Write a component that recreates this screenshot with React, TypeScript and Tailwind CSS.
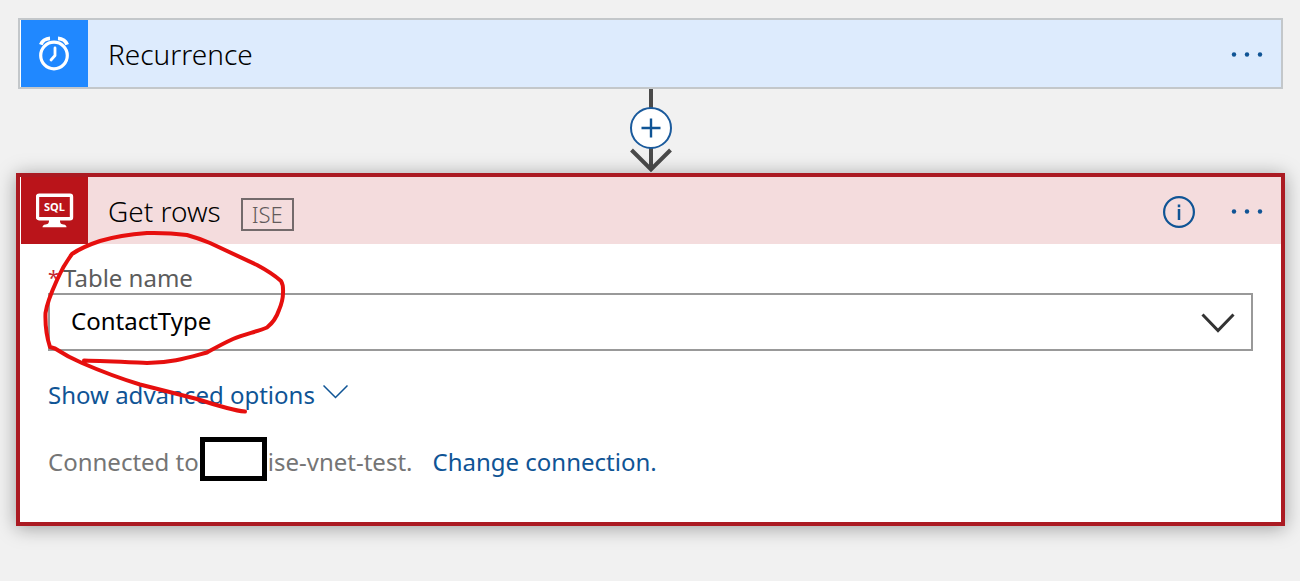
import React from "react";

function MoreButton({ label }: { label: string }) {
  return (
    <button type="button" aria-label={label} className="flex h-8 w-8 items-center justify-center text-[#0f5495]">
      <svg width="32" height="6" viewBox="0 0 32 6" fill="currentColor">
        <circle cx="3" cy="3.500" r="2.200" />
        <circle cx="16" cy="3.500" r="2.200" />
        <circle cx="29" cy="3.500" r="2.200" />
      </svg>
    </button>
  );
}

function ClockIcon() {
  return (
    <svg width="34" height="38" viewBox="0 0 34 38" fill="none" stroke="#fff">
      <circle cx="16" cy="20.500" r="13.300" strokeWidth="3.200" />
      <path d="M17 13v7.500l-4 4.500" strokeWidth="2.800" strokeLinecap="round" strokeLinejoin="round" />
      <path d="M2.800 9.600C4 6.400 7.600 3.600 12 3.400" strokeWidth="3.800" />
      <path d="M29.200 9.600C28 6.400 24.400 3.600 20 3.400" strokeWidth="3.800" />
    </svg>
  );
}

function SqlIcon() {
  return (
    <svg width="38" height="36" viewBox="0 0 38 36">
      <rect x="1.500" y="2.300" width="34" height="23.400" rx="1.500" fill="none" stroke="#fff" strokeWidth="3.400" />
      <path d="M13 27h11c0 3 .5 4 3.500 4.500q3 .5 3 2.800h-24q0-2.300 3-2.800c3-.5 3.500-1.500 3.500-4.500z" fill="#fff" />
      <text x="18.500" y="17.500" textAnchor="middle" fontSize="11" fontWeight="700" fill="#fff">
        SQL
      </text>
    </svg>
  );
}

function Connector() {
  return (
    <div className="relative flex h-[84px] justify-center">
      <svg width="44" height="84" viewBox="0 0 44 84" fill="none" stroke="#4a4a4a" strokeWidth="4">
        <path d="M22 0v80M2.500 61L22 80.500 41.500 61" />
      </svg>
      <button
        type="button"
        aria-label="Insert a new step"
        className="absolute top-[18px] flex h-[42px] w-[42px] items-center justify-center rounded-full border-2 border-[#1a5a9c] bg-white text-[#0f5495]"
      >
        <svg width="20" height="20" viewBox="0 0 20 20" stroke="currentColor" strokeWidth="2.400">
          <path d="M10 .5v19M.5 10h19" />
        </svg>
      </button>
    </div>
  );
}

function Scribble() {
  return (
    <svg
      className="pointer-events-none absolute top-[50px] left-[20px]"
      width="250"
      height="190"
      viewBox="40 227 250 190"
      fill="none"
      stroke="#e60f0e"
      strokeWidth="4"
      strokeLinecap="round"
      strokeLinejoin="round"
      aria-hidden="true"
    >
      <path d="M84 360.500C105 361 125 362 147 363C172 363 190 357 207 352.500C215 348 222 344 233 339C245 334 256 332 267 327.500C274 322 277 316 279 310C282 303 283 298 283 293Q283.500 285 281 281Q272 273 257 265L210 243Q198 238 187 235Q168 232.500 147 233Q120 235 100 241Q82 247 72 254Q63 266 57 280Q47 302 45.500 313C45 328 47 338 50 347L55 348.500Q68 357 82 363Q112 376 140 384.500L197 399Q212 404 227 408Q238 411 245 411.500" />
    </svg>
  );
}

export default function App() {
  return (
    <main className="min-h-screen bg-[#f1f1f1] pt-[18px] pr-[15px] pb-14 pl-4 font-['Noto_Sans','Open_Sans',sans-serif] text-2xl">
      <section className="mx-[2px] flex items-center border-2 border-[#c3c7ca] bg-[#ddebfd] pr-[18px]">
        <div className="flex h-[67px] w-[68px] items-center justify-center border-l border-white bg-[#2088ff]">
          <ClockIcon />
        </div>
        <h2 className="ml-5 flex-1 text-[28px] leading-9 font-light text-black">Recurrence</h2>
        <MoreButton label="Recurrence menu" />
      </section>

      <Connector />

      <section className="relative border-4 border-[#ab1a22] bg-white shadow-[0_2px_18px_rgba(0,0,0,0.35)]">
        <header className="flex items-center bg-[#f4dcdd] pr-[18px]">
          <div className="flex h-[67px] w-[68px] items-center justify-center border-l border-white bg-[#ba141a]">
            <SqlIcon />
          </div>
          <h2 className="ml-5 pt-px text-[28px] leading-9 font-light text-black">Get rows</h2>
          <span className="mt-2 ml-5 flex h-[33px] w-[53px] items-center justify-center border-2 border-[#736a6b] text-[22px] font-light text-[#625a5b]">
            ISE
          </span>
          <button type="button" aria-label="Information" className="mr-[36px] ml-auto pt-[2px] text-[#0f5495]">
            <svg width="32" height="32" viewBox="0 0 32 32" fill="none" stroke="currentColor">
              <circle cx="16" cy="16" r="14.900" strokeWidth="2.200" />
              <path d="M16 13v11M16 8.500v2.800" strokeWidth="2.500" />
            </svg>
          </button>
          <MoreButton label="Get rows menu" />
        </header>

        <div className="px-7 pt-[18px] pb-[41px]">
          <label htmlFor="table" className="flex leading-[31px] text-[#5c5c5c]">
            <span className="w-[15px] text-xl leading-[31px] text-[#c4262e]">*</span>
            Table name
          </label>
          <div className="relative">
            <select
              id="table"
              defaultValue="ContactType"
              className="block h-[58px] w-full appearance-none border-2 border-[#999] bg-white pb-[2px] pl-[21px] text-black"
            >
              <option>ContactType</option>
            </select>
            <svg
              className="pointer-events-none absolute top-5 right-[18px]"
              width="34"
              height="20"
              viewBox="0 0 34 20"
              fill="none"
              stroke="#333"
              strokeWidth="3"
            >
              <path d="M1.500 1.500L17 17.500 32.500 1.500" />
            </svg>
          </div>
          <button type="button" className="mt-7 flex items-center gap-2 leading-8 text-[#0f5495]">
            Show advanced options
            <svg width="25" height="14" viewBox="0 0 25 14" className="mb-1.5" fill="none" stroke="currentColor" strokeWidth="1.500">
              <path d="M.5 .5l12 12 12-12" />
            </svg>
          </button>
          <div className="mt-[26px] flex items-center text-[#757575]">
            <span className="pt-1.5">Connected to</span>
            <span className="mx-px h-[44px] w-[67px] border-[5px] border-black bg-white" />
            <span className="pt-1.5">ise-vnet-test.</span>
            <a href="#connection" className="ml-5 pt-1.5 text-[#0f5495]">
              Change connection.
            </a>
          </div>
        </div>
        <Scribble />
      </section>
    </main>
  );
}
